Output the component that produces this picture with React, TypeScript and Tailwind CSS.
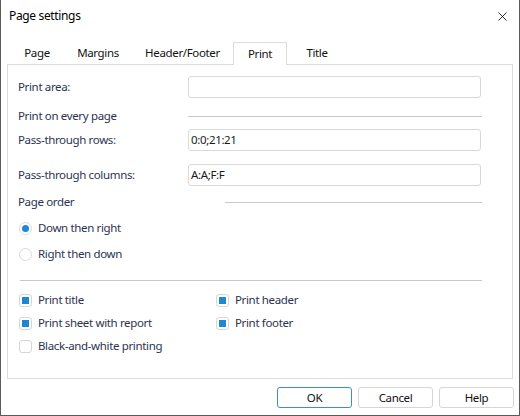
import { X } from 'lucide-react';

const font = { fontFamily: '"Noto Sans", "Liberation Sans", sans-serif' };

function Field({ label, value }: { label: string; value?: string }) {
  return (
    <div className="flex h-[22px] items-center">
      <span className="w-[170px] shrink-0">{label}</span>
      <div className="flex h-[22px] w-[293px] items-center rounded-[3px] border border-[#d9d9d9] bg-white px-[2px] text-[#1a1a1a]">
        {value}
      </div>
    </div>
  );
}

function Heading({ label, wide }: { label: string; wide?: boolean }) {
  return (
    <div className="flex h-[16px] items-center">
      <span className={wide ? 'w-[207px] shrink-0' : 'w-[170px] shrink-0'}>{label}</span>
      <div className="mr-[30px] h-px flex-1 bg-[#c8c8c8]" />
    </div>
  );
}

function Radio({ label, checked }: { label: string; checked?: boolean }) {
  return (
    <div className="flex h-[20px] items-center gap-[6px]">
      <span className="ml-[1px] flex h-[13px] w-[13px] items-center justify-center rounded-full border border-[#dadada] bg-white">
        {checked && <span className="h-[7px] w-[7px] rounded-full bg-[#1e88d3]" />}
      </span>
      <span>{label}</span>
    </div>
  );
}

function Check({ label, checked }: { label: string; checked?: boolean }) {
  return (
    <div className="flex h-[20px] items-center gap-[6px]">
      <span className="flex h-[13px] w-[13px] items-center justify-center rounded-[3px] border border-[#d6d6d6] bg-white">
        {checked && <span className="h-[7px] w-[7px] bg-[#1e88d3]" />}
      </span>
      <span>{label}</span>
    </div>
  );
}

const tabs = [
  { name: 'Page', w: 'w-[54px]' },
  { name: 'Margins', w: 'w-[68px]' },
  { name: 'Header/Footer', w: 'w-[101px]' },
  { name: 'Print', w: 'w-[54px]', active: true },
  { name: 'Title', w: 'w-[60px]' },
];

export default function App() {
  return (
    <div
      style={font}
      className="flex h-[416px] w-[520px] flex-col border-x border-b border-[#5b5b5b] bg-white text-[11.5px] tracking-[-0.35px] text-[#2b3350]"
    >
      {/* Title bar */}
      <div className="flex h-[32px] items-center justify-between pl-[8px] pr-[9px]">
        <span className="text-[12px] text-black">Page settings</span>
        <X className="h-[15px] w-[15px] text-black" strokeWidth={1.3} />
      </div>

      {/* Tabs */}
      <div className="mt-[10px] flex h-[22px] pl-[9px] text-[#111]">
        {tabs.map((t) => (
          <div
            key={t.name}
            className={
              t.active
                ? `${t.w} relative z-10 -mb-px flex h-[23px] items-center justify-center border-x border-t border-[#dcdcd8] bg-white`
                : `${t.w} flex items-center justify-center`
            }
          >
            {t.name}
          </div>
        ))}
      </div>

      {/* Panel */}
      <div className="mx-[6px] h-[315px] border border-[#dcdcd8] pl-[10px] pt-[11px]">
        <Field label="Print area:" />
        <div className="mt-[10px]">
          <Heading label="Print on every page" />
        </div>
        <div className="mt-[5px]">
          <Field label="Pass-through rows:" value="0:0;21:21" />
        </div>
        <div className="mt-[13px]">
          <Field label="Pass-through columns:" value="A:A;F:F" />
        </div>
        <div className="mt-[8px]">
          <Heading label="Page order" wide />
        </div>
        <div className="mt-[8px] flex flex-col gap-[6px]">
          <Radio label="Down then right" checked />
          <Radio label="Right then down" />
        </div>
        <div className="ml-[2px] mr-[30px] mt-[16px] h-px bg-[#c8c8c8]" />
        <div className="mt-[9px] flex">
          <div className="flex w-[198px] flex-col gap-[3px] pl-[1px]">
            <Check label="Print title" checked />
            <Check label="Print sheet with report" checked />
            <Check label="Black-and-white printing" />
          </div>
          <div className="flex flex-col gap-[3px]">
            <Check label="Print header" checked />
            <Check label="Print footer" checked />
          </div>
        </div>
      </div>

      {/* Buttons */}
      <div className="mt-[8px] flex justify-end gap-[6px] pr-[5px] text-[#111]">
        <button className="h-[21px] w-[75px] rounded-[3px] border border-[#3b8ed0] bg-white">OK</button>
        <button className="h-[21px] w-[75px] rounded-[3px] border border-[#d6d6d6] bg-white">Cancel</button>
        <button className="h-[21px] w-[75px] rounded-[3px] border border-[#d6d6d6] bg-white">Help</button>
      </div>
    </div>
  );
}
